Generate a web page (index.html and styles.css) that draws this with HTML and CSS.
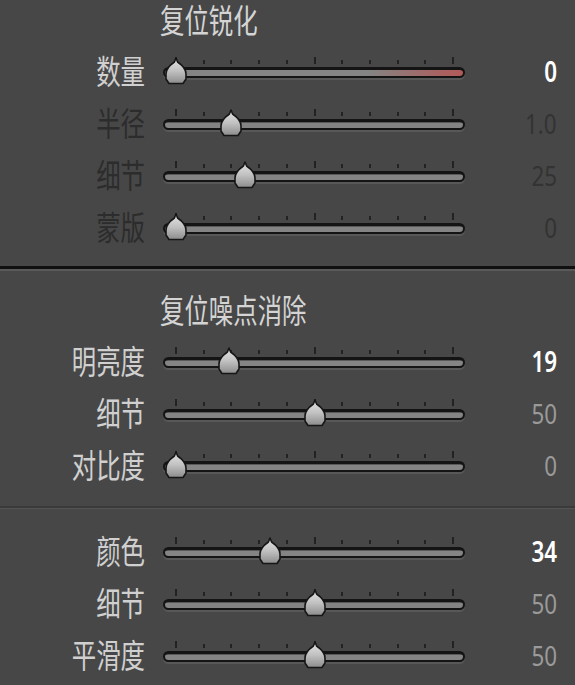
FILE: index.html
```html
<!DOCTYPE html>
<html lang="zh-CN">
<head>
    <meta charset="utf-8">
    <title>复位</title>
    <link rel="stylesheet" href="styles.css">
</head>
<body>
    <svg class="defs" width="0" height="0">
        <defs>
            <linearGradient id="thumbFill" x1="0" y1="0" x2="0" y2="1">
                <stop offset="0" stop-color="#e4e4e4"/>
                <stop offset="0.5" stop-color="#c2c2c2"/>
                <stop offset="1" stop-color="#8c8c8c"/>
            </linearGradient>
            <symbol id="thumb" viewBox="0 0 22 28">
                <path d="M11 1 L12.6 5 C17 8 21 12 21 17 L21 22 L18 26.5 L4 26.5 L1 22 L1 17 C1 12 5 8 9.4 5 Z" fill="url(#thumbFill)" stroke="#161616" stroke-width="1.6" stroke-linejoin="round"/>
            </symbol>
        </defs>
    </svg>

    <main class="panel">
        <section class="group first">
            <h2 class="title"><span>复位锐化</span></h2>
            <div class="rows">
                <div class="row on">
                    <div class="label"><span>数量</span></div>
                    <div class="slider"><div class="ticks"></div><div class="track red"></div><svg class="knob" style="--v: 0"><use href="#thumb"/></svg></div>
                    <div class="value"><span>0</span></div>
                </div>
                <div class="row off">
                    <div class="label"><span>半径</span></div>
                    <div class="slider"><div class="ticks"></div><div class="track"></div><svg class="knob" style="--v: 0.2"><use href="#thumb"/></svg></div>
                    <div class="value"><span>1.0</span></div>
                </div>
                <div class="row off">
                    <div class="label"><span>细节</span></div>
                    <div class="slider"><div class="ticks"></div><div class="track"></div><svg class="knob" style="--v: 0.25"><use href="#thumb"/></svg></div>
                    <div class="value"><span>25</span></div>
                </div>
                <div class="row off">
                    <div class="label"><span>蒙版</span></div>
                    <div class="slider"><div class="ticks"></div><div class="track"></div><svg class="knob" style="--v: 0"><use href="#thumb"/></svg></div>
                    <div class="value"><span>0</span></div>
                </div>
            </div>
        </section>

        <section class="group second">
            <h2 class="title"><span>复位噪点消除</span></h2>
            <div class="rows">
                <div class="row on">
                    <div class="label"><span>明亮度</span></div>
                    <div class="slider"><div class="ticks"></div><div class="track"></div><svg class="knob" style="--v: 0.19"><use href="#thumb"/></svg></div>
                    <div class="value"><span>19</span></div>
                </div>
                <div class="row">
                    <div class="label"><span>细节</span></div>
                    <div class="slider"><div class="ticks"></div><div class="track"></div><svg class="knob" style="--v: 0.5"><use href="#thumb"/></svg></div>
                    <div class="value"><span>50</span></div>
                </div>
                <div class="row">
                    <div class="label"><span>对比度</span></div>
                    <div class="slider"><div class="ticks"></div><div class="track"></div><svg class="knob" style="--v: 0"><use href="#thumb"/></svg></div>
                    <div class="value"><span>0</span></div>
                </div>
            </div>
        </section>

        <section class="group third">
            <div class="rows">
                <div class="row on">
                    <div class="label"><span>颜色</span></div>
                    <div class="slider"><div class="ticks"></div><div class="track"></div><svg class="knob" style="--v: 0.34"><use href="#thumb"/></svg></div>
                    <div class="value"><span>34</span></div>
                </div>
                <div class="row">
                    <div class="label"><span>细节</span></div>
                    <div class="slider"><div class="ticks"></div><div class="track"></div><svg class="knob" style="--v: 0.5"><use href="#thumb"/></svg></div>
                    <div class="value"><span>50</span></div>
                </div>
                <div class="row">
                    <div class="label"><span>平滑度</span></div>
                    <div class="slider"><div class="ticks"></div><div class="track"></div><svg class="knob" style="--v: 0.5"><use href="#thumb"/></svg></div>
                    <div class="value"><span>50</span></div>
                </div>
            </div>
        </section>
    </main>
</body>
</html>
```

FILE: styles.css
```css
html {
    background: #474747;
}
body {
    margin: 0;
    width: 575px;
    height: 685px;
    overflow: hidden;
    background: #474747;
    font-family: "Noto Sans CJK SC", "Noto Sans", sans-serif;
    color: #d2d2d2;
}
.defs {
    position: absolute;
    width: 0;
    height: 0;
}

.panel {
    display: flex;
    flex-direction: column;
}

.group.first {
    padding-top: 2px;
    padding-bottom: 13px;
    border-bottom: 3px solid #101010;
    box-shadow: 0 2px 0 #5a5a5a;
}
.group.second {
    padding-top: 23px;
    padding-bottom: 15px;
    border-bottom: 2px solid #3a3a3a;
    box-shadow: 0 1px 0 #545454;
}
.group.third {
    padding-top: 17px;
}

.title {
    margin: 0 0 9px 0;
    padding-left: 160px;
    height: 34px;
    line-height: 34px;
    font-size: 33px;
    font-weight: normal;
    color: #d4d4d4;
    white-space: nowrap;
}
.title span {
    display: inline-block;
    line-height: 34px;
    transform: scaleX(0.74);
    transform-origin: left center;
}

.rows {
    display: grid;
    grid-template-columns: 145px 302px 74px;
    grid-auto-rows: 52px;
    column-gap: 18px;
}
.row {
    display: contents;
}

.label, .value {
    display: flex;
    align-items: center;
    justify-content: flex-end;
    white-space: nowrap;
}
.label span {
    display: inline-block;
    font-size: 33px;
    line-height: 40px;
    margin-bottom: 2px;
    transform: scaleX(0.74);
    transform-origin: right center;
    color: #d0d0d0;
}
.value span {
    display: inline-block;
    font-family: "Noto Sans", sans-serif;
    font-size: 28px;
    line-height: 36px;
    transform: scaleX(0.8);
    transform-origin: right center;
    color: #9a9a9a;
}
.row.on .value span {
    color: #ffffff;
    font-weight: 600;
}
.row.off .label span {
    color: #2c2c2c;
}
.row.off .value span {
    color: #333333;
}

.slider {
    position: relative;
    display: flex;
    align-items: center;
}
.track {
    flex: 1;
    height: 11px;
    box-sizing: border-box;
    margin-top: 2px;
    border: 2px solid #141414;
    border-top-width: 3px;
    border-radius: 6px;
    background: linear-gradient(#5a5a5a 0 1px, #848484 1px);
    box-shadow: 0 2px 0 #585858;
}
.track.red {
    background: linear-gradient(to right, #848484 0, #848484 68%, #a86262 92%, #b25a5a 100%);
}
.ticks {
    position: absolute;
    left: 12px;
    top: 12px;
    width: 280px;
    height: 7px;
    background:
        repeating-linear-gradient(to right, #222 0 2px, transparent 2px 138.5px) 0 0 / 100% 7px no-repeat,
        repeating-linear-gradient(to right, #222 0 2px, transparent 2px 27.7px) 0 100% / 100% 4px no-repeat;
}
.knob {
    position: absolute;
    top: 12px;
    left: calc(2px + var(--v) * 277px);
    width: 22px;
    height: 28px;
}
```
